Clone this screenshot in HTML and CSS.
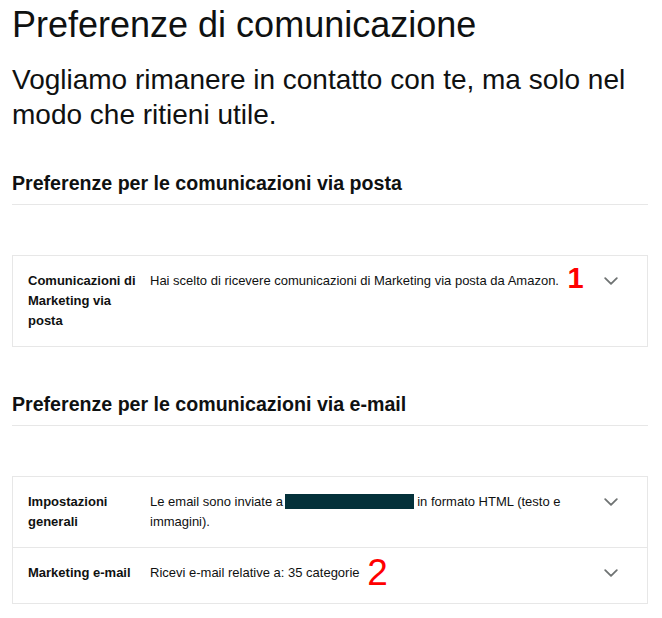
FILE: index.html
```html
<!DOCTYPE html>
<html lang="it">
<head>
<meta charset="utf-8">
<title>Preferenze di comunicazione</title>
<link rel="stylesheet" href="styles.css">
</head>
<body>
<main class="page">
  <h1 class="title">Preferenze di comunicazione</h1>
  <p class="intro">Vogliamo rimanere in contatto con te, ma solo nel modo che ritieni utile.</p>

  <section class="section">
    <h2 class="section-title">Preferenze per le comunicazioni via posta</h2>
    <div class="card">
      <div class="row">
        <div class="label">Comunicazioni di Marketing via posta</div>
        <div class="value">Hai scelto di ricevere comunicazioni di Marketing via posta da Amazon. <span class="mark mark-one">1</span></div>
        <svg class="chevron" width="14" height="8" viewBox="0 0 14 8" aria-hidden="true"><polyline points="1.2,1.2 7,6.8 12.8,1.2"/></svg>
      </div>
    </div>
  </section>

  <section class="section">
    <h2 class="section-title">Preferenze per le comunicazioni via e-mail</h2>
    <div class="card">
      <div class="row">
        <div class="label">Impostazioni generali</div>
        <div class="value">Le email sono inviate a <span class="redacted"></span> in formato HTML (testo e immagini).</div>
        <svg class="chevron" width="14" height="8" viewBox="0 0 14 8" aria-hidden="true"><polyline points="1.2,1.2 7,6.8 12.8,1.2"/></svg>
      </div>
      <div class="row row-last">
        <div class="label">Marketing e-mail</div>
        <div class="value">Ricevi e-mail relative a: 35 categorie <span class="mark mark-two">2</span></div>
        <svg class="chevron" width="14" height="8" viewBox="0 0 14 8" aria-hidden="true"><polyline points="1.2,1.2 7,6.8 12.8,1.2"/></svg>
      </div>
    </div>
  </section>
</main>
</body>
</html>
```

FILE: styles.css
```css
html, body {
  margin: 0;
  padding: 0;
  background: #ffffff;
}

body {
  font-family: "Liberation Sans", Arial, sans-serif;
  color: #0f1111;
}

.page {
  padding: 0 14px 0 12px;
}

.title {
  margin: 0;
  padding-top: 3px;
  font-size: 36px;
  line-height: 44px;
  font-weight: 400;
}

.intro {
  margin: 15px 0 38px;
  font-size: 28px;
  line-height: 35px;
  font-weight: 400;
}

.section + .section {
  margin-top: 44px;
}

.section-title {
  margin: 0;
  padding-bottom: 8px;
  font-size: 19.6px;
  line-height: 26px;
  font-weight: 700;
  border-bottom: 1px solid #e7e7e7;
}

.card {
  margin-top: 50px;
  border: 1px solid #e7e7e7;
}

.row {
  display: grid;
  grid-template-columns: 110px 1fr 14px;
  column-gap: 12px;
  padding: 15px 29px 15px 15px;
  font-size: 13px;
  line-height: 20px;
}

.row + .row {
  border-top: 1px solid #e7e7e7;
}

.row-last {
  padding-bottom: 20px;
}

.label {
  font-weight: 700;
}

.value {
  font-weight: 400;
}

.chevron {
  margin-top: 6px;
  fill: none;
  stroke: #6f7373;
  stroke-width: 1.8;
  stroke-linecap: round;
  stroke-linejoin: round;
}

.redacted {
  display: inline-block;
  width: 129px;
  height: 15px;
  margin-left: -2px;
  vertical-align: -3px;
  background: #04313a;
}

.mark {
  color: #ff0000;
  line-height: 0;
}

.mark-one {
  margin-left: 5px;
  font-size: 29px;
  font-weight: 700;
  vertical-align: -3px;
}

.mark-two {
  margin-left: 4px;
  font-size: 37px;
  font-weight: 400;
  vertical-align: -8px;
}
```
